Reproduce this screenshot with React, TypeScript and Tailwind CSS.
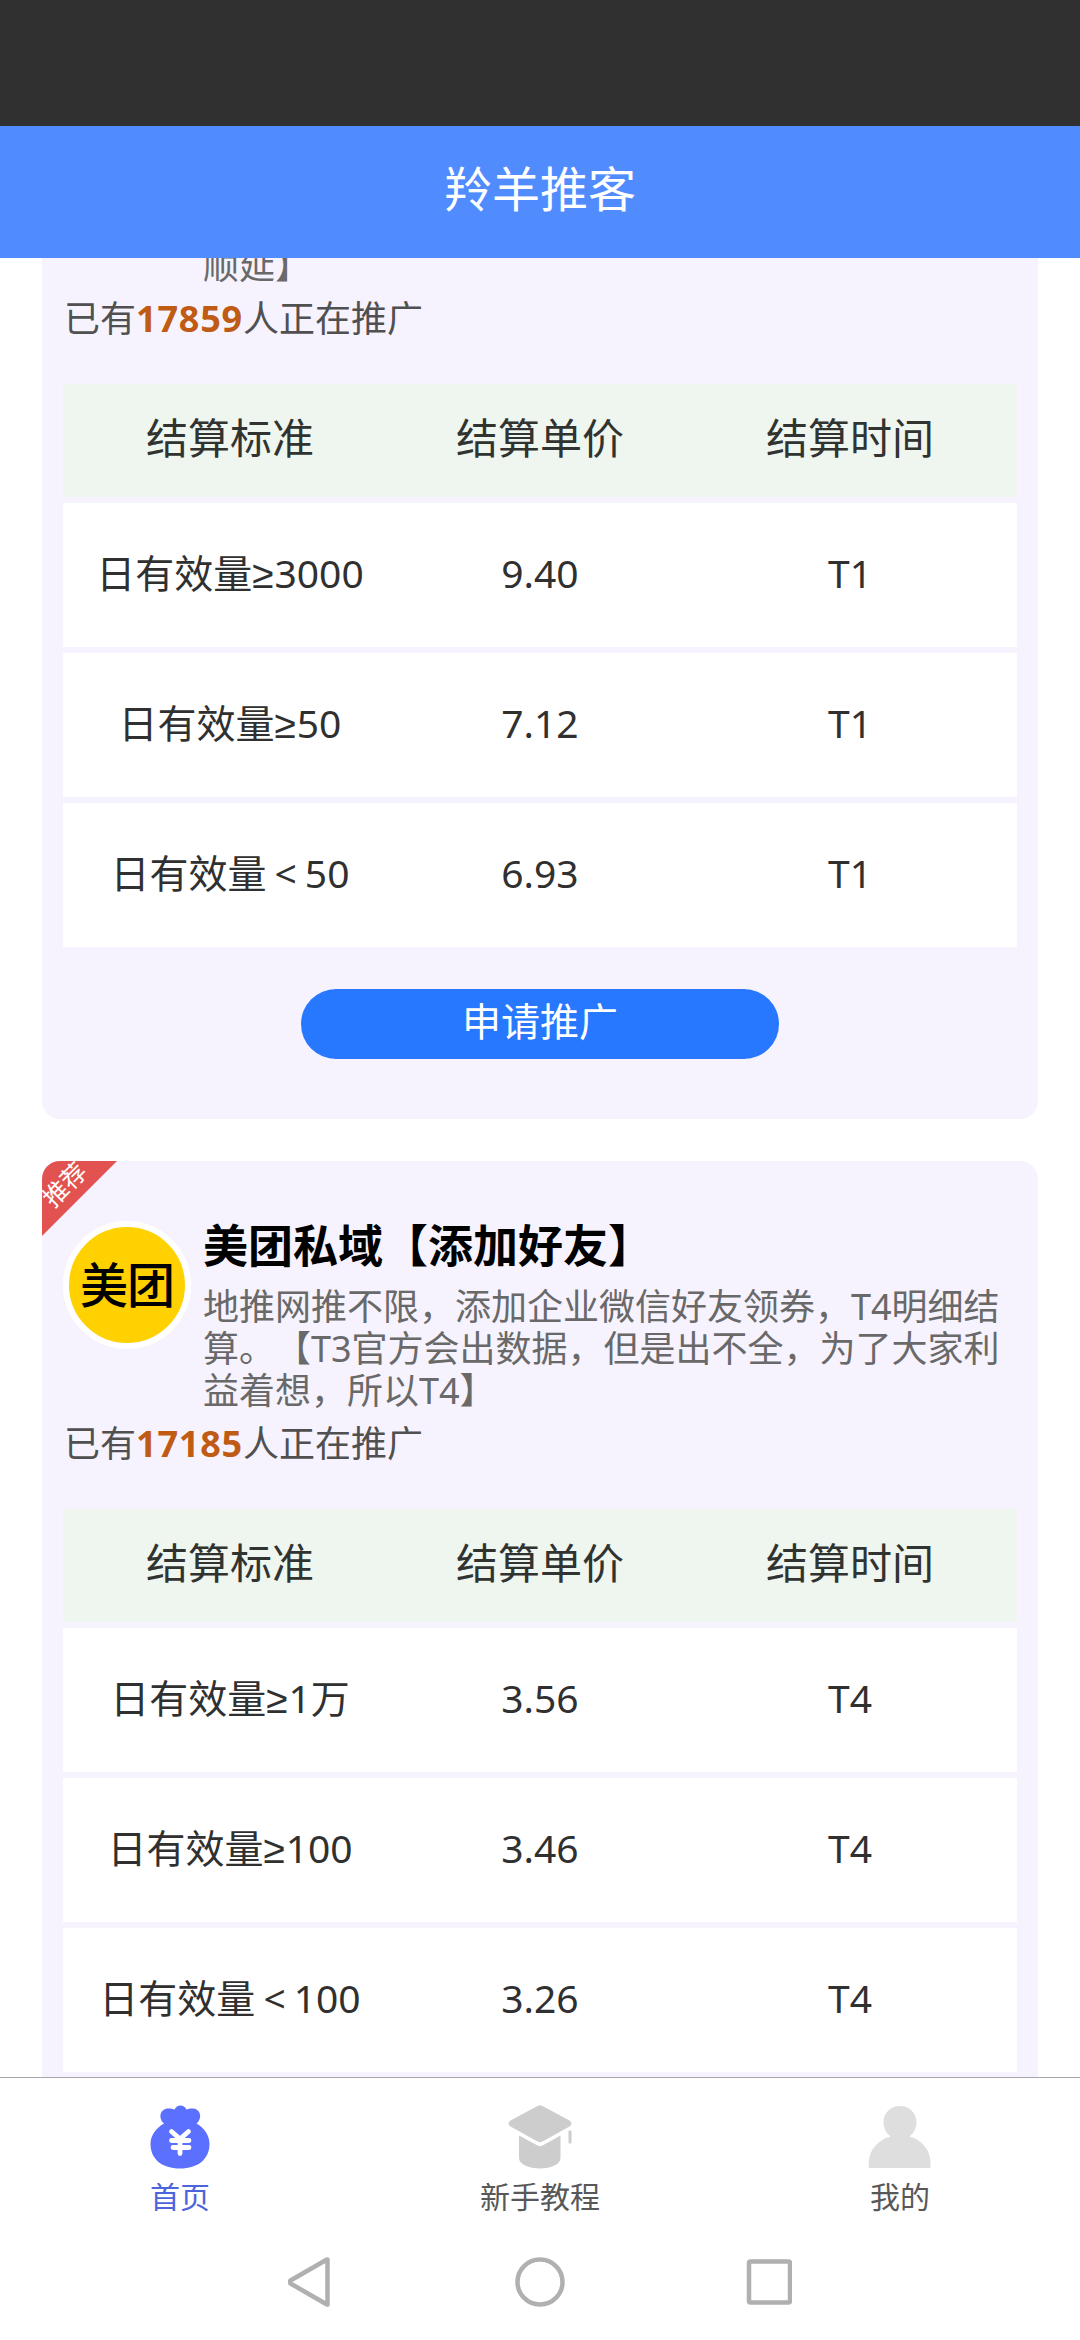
import clsx from 'clsx';

interface PriceRow {
  sign: '≥' | '<';
  amount: string;
  price: string;
  time: string;
}

interface Project {
  id: number;
  logo?: string;
  title?: string;
  desc: string[];
  promoters: number;
  recommended: boolean;
  rows: PriceRow[];
}

const projects: Project[] = [
  {
    id: 1,
    desc: ['', '', '顺延】'],
    promoters: 17859,
    recommended: false,
    rows: [
      { sign: '≥', amount: '3000', price: '9.40', time: 'T1' },
      { sign: '≥', amount: '50', price: '7.12', time: 'T1' },
      { sign: '<', amount: '50', price: '6.93', time: 'T1' },
    ],
  },
  {
    id: 2,
    logo: '美团',
    title: '美团私域【添加好友】',
    desc: [
      '地推网推不限，添加企业微信好友领券，T4明细结',
      '算。【T3官方会出数据，但是出不全，为了大家利',
      '益着想，所以T4】',
    ],
    promoters: 17185,
    recommended: true,
    rows: [
      { sign: '≥', amount: '1万', price: '3.56', time: 'T4' },
      { sign: '≥', amount: '100', price: '3.46', time: 'T4' },
      { sign: '<', amount: '100', price: '3.26', time: 'T4' },
    ],
  },
];

const MoneyBagIcon = () => (
  <svg className="h-16 w-16" viewBox="0 0 64 64">
    <path
      fill="#5b70ff"
      d="M16 18.500C10.500 14.500 11 4.500 19.500 3.500C22.500 3.200 24.500 3.800 26.500 4.500C29 -.8 36 -.8 38.500 4.500C40.500 3.800 42.500 3.200 45.500 3.500C53.500 4.500 54 14.500 48.500 18.500C56.500 23 61.500 30.500 61.500 39C61.500 54 50 63.500 32 63.500C14 63.500 2.500 54 2.500 39C2.500 30.500 8 23 16 18.500Z"
    />
    <path
      d="M23.500 26.500L32 34L40.500 26.500M23.500 35.500H41M25 42.500H41M32 34V48.500"
      fill="none"
      stroke="#fff"
      strokeWidth="4.800"
      strokeLinecap="round"
      strokeLinejoin="round"
    />
  </svg>
);

const GraduationIcon = () => (
  <svg className="h-16 w-16" viewBox="0 0 64 64" fill="#cdcdcd">
    <path d="M29.500 1Q32 -.4 34.500 1L61.500 15.500Q65.500 18.500 61.500 21.500L34.500 36.500Q32 37.800 29.500 36.500L2.500 21.500Q-1.500 18.500 2.500 15.500Z" />
    <path d="M11 30.500L29.500 40.500Q32 42 34.500 40.500L52.500 30.500V53C52.500 59 43.500 63.500 32 63.500C20.500 63.500 11 59 11 53Z" />
    <rect x="60.500" y="25.500" width="3" height="13" rx="1" />
  </svg>
);

const UserIcon = () => (
  <svg className="h-16 w-16" viewBox="0 0 64 64" fill="#dedede">
    <path d="M32 1C41.500 1 48.500 8 48.500 17C48.500 23 45.500 28.500 41.500 31.500C54 35 62.500 45 62.500 58V63H.8V58C.8 45 10 35 22.500 31.500C18.500 28.500 15.500 23 15.500 17C15.500 8 22.500 1 32 1Z" />
  </svg>
);

const tabs = [
  { label: '首页', icon: <MoneyBagIcon />, active: true },
  { label: '新手教程', icon: <GraduationIcon />, active: false },
  { label: '我的', icon: <UserIcon />, active: false },
];

const PriceTable = ({ rows }: { rows: PriceRow[] }) => (
  <div className="flex flex-col gap-1.5">
    <div className="grid h-[113px] grid-cols-3 items-center bg-[#eff5ef] px-3 pb-[7px] text-center text-[42px] text-[#303330]">
      <span>结算标准</span>
      <span>结算单价</span>
      <span>结算时间</span>
    </div>
    {rows.map((row) => (
      <div
        key={row.sign + row.amount}
        className="grid h-36 grid-cols-3 items-center bg-white px-3 pb-1 text-center text-[39px] text-[#303030]"
      >
        <span>
          日有效量
          <span
            className={clsx(
              row.sign === '≥'
                ? "font-['Liberation_Sans'] leading-none tracking-[0.8px]"
                : 'px-[8px]'
            )}
          >
            {row.sign}
          </span>
          {row.amount}
        </span>
        <span>{row.price}</span>
        <span>{row.time}</span>
      </div>
    ))}
  </div>
);

const ProjectCard = ({ project }: { project: Project }) => (
  <section className="relative h-[1083px] shrink-0 overflow-hidden rounded-[18px] bg-[#f6f3fe] px-[21px] pt-[60px]">
    {project.recommended && (
      <div className="absolute top-0 left-0 h-[75px] w-[75px] bg-[#e15250] [clip-path:polygon(0_0,100%_0,0_100%)]">
        <span className="absolute top-[5px] left-[-3px] w-[50px] -rotate-45 text-center text-[25px] leading-9 text-white">
          推荐
        </span>
      </div>
    )}
    <div className="flex h-[192px]">
      <div className="flex h-32 w-32 shrink-0 items-center justify-center rounded-full border-[6px] border-white bg-[#ffd100] text-[48px] font-medium tracking-[-1px] whitespace-nowrap text-black">
        {project.logo}
      </div>
      <div className="ml-3 whitespace-nowrap">
        <h2 className="h-[65px] text-[45px] leading-[50px] font-bold text-black">{project.title}</h2>
        {project.desc.map((line, i) => (
          <p key={i} className="h-[42px] text-[36px] leading-[42px] text-[#696969]">
            {line}
          </p>
        ))}
      </div>
    </div>
    <p className="h-24 pl-px text-[36px] leading-[62px] text-[#505050]">
      已有<b className="tracking-[0.8px] text-[#bf5b14]">{project.promoters}</b>人正在推广
    </p>
    <PriceTable rows={project.rows} />
    <button className="mx-auto mt-[42px] block h-[70px] w-[478px] rounded-full bg-[#2878ff] pb-1.5 text-[39px] leading-[64px] text-white">
      申请推广
    </button>
  </section>
);

export default function App() {
  return (
    <div className="flex h-[2340px] w-[1080px] flex-col overflow-hidden bg-white font-['Noto_Sans','Noto_Sans_CJK_SC',sans-serif] [text-spacing-trim:space-all]">
      <div className="h-[126px] shrink-0 bg-[#303030]" />
      <header className="flex h-[132px] shrink-0 items-center justify-center bg-[#518cff] pb-1.5 text-5xl text-white">
        羚羊推客
      </header>

      {/* list is scrolled so the first card starts above the header */}
      <main className="min-h-0 flex-1 overflow-hidden px-[42px]">
        <div className="-mt-[222px] flex flex-col gap-[42px]">
          {projects.map((project) => (
            <ProjectCard key={project.id} project={project} />
          ))}
        </div>
      </main>

      <nav className="grid h-[146px] shrink-0 grid-cols-3 border-t border-[#a6a6ac] bg-white pt-[27px]">
        {tabs.map((tab) => (
          <div
            key={tab.label}
            className={clsx(
              'flex flex-col items-center text-[30px] leading-[56px]',
              tab.active ? 'text-[#4d64dc]' : 'text-[#585858]'
            )}
          >
            {tab.icon}
            {tab.label}
          </div>
        ))}
      </nav>

      <div className="flex h-[117px] shrink-0 items-center justify-center">
        <svg width="504" height="50" viewBox="0 0 504 50" fill="none" stroke="#b0b0b0" strokeWidth="4.500">
          <path d="M39.500 2.800V47.200Q39.500 48 38.500 47.200L2.500 26.500Q1.500 25 2.500 23.500L38.500 2.800Q39.500 2 39.500 2.800Z" />
          <circle cx="252" cy="25" r="22.500" />
          <rect x="461" y="4.500" width="41" height="41" rx="1.500" />
        </svg>
      </div>
    </div>
  );
}
